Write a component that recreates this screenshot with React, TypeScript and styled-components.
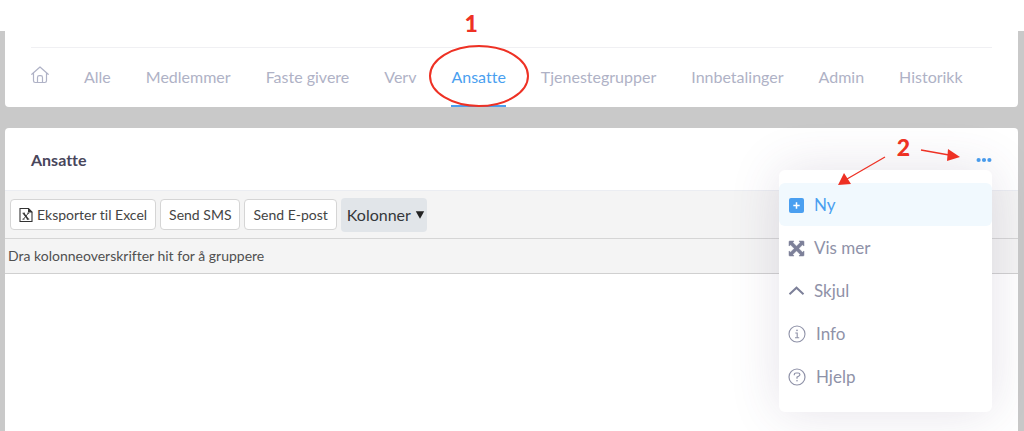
import React from "react";
import styled, { createGlobalStyle, css } from "styled-components";

const GlobalStyle = createGlobalStyle`
  *, *::before, *::after { box-sizing: border-box; }
  body {
    margin: 0;
    background: #c9c9c9;
    font-family: Lato, "Liberation Sans", sans-serif;
    font-variant-ligatures: none;
    color: #a7abc3;
  }
`;

const Page = styled.div`
  display: flex;
  flex-direction: column;
  min-height: 100vh;
`;

const TopBand = styled.div`
  height: 31px;
  background: #fff;
`;

const NavCard = styled.header`
  margin: 0 6px 21px 5px;
  padding: 16px 26px 0;
  background: #fff;
  border-radius: 0 0 4px 4px;
`;

const Tabs = styled.nav`
  display: flex;
  align-items: stretch;
  gap: 35px;
  height: 60px;
  border-top: 1px solid #f0f0f3;
`;

const Tab = styled.a<{ $active?: boolean }>`
  position: relative;
  display: flex;
  align-items: center;
  white-space: nowrap;
  font-size: 16px;
  line-height: 20px;
  text-decoration: none;
  color: ${(p) => (p.$active ? "#4a9ff0" : "#afb2c6")};
  border-bottom: 2px solid ${(p) => (p.$active ? "#4a9ff0" : "transparent")};
`;

const HomeIcon = styled.svg`
  width: 18px;
  height: 18px;
  margin-top: -4px;
`;

const Ring = styled.svg`
  position: absolute;
  z-index: 2;
  left: 50%;
  top: -4px;
  width: 102px;
  height: 64px;
  transform: translateX(-50%);
  pointer-events: none;
`;

const StepNumber = styled.strong`
  position: absolute;
  z-index: 4;
  color: #ee3124;
  font-size: 23px;
  font-weight: 900;
  line-height: 28px;
  pointer-events: none;
`;

const FirstStep = styled(StepNumber)`
  left: 13px;
  top: -39px;
`;

const SecondStep = styled(StepNumber)`
  right: 82px;
  top: -19px;
`;

const Panel = styled.main`
  flex: 1;
  margin: 0 6px 0 5px;
  background: #fff;
  border-radius: 4px 4px 0 0;
`;

const PanelHeader = styled.div`
  display: flex;
  align-items: center;
  justify-content: space-between;
  height: 63px;
  padding: 2px 26px 0;
  border-bottom: 1px solid #ebedf2;
`;

const Title = styled.h1`
  margin: 0;
  font-size: 16px;
  font-weight: 700;
  line-height: 20px;
  color: #48465b;
`;

const Actions = styled.div`
  position: relative;
  display: flex;
`;

const DotsButton = styled.button`
  display: flex;
  align-items: center;
  width: 16px;
  height: 16px;
  padding: 0;
  border: 0;
  background: none;
  color: #4a9ff0;
`;

const Arrows = styled.svg`
  position: absolute;
  z-index: 4;
  right: 29px;
  top: -12px;
  width: 128px;
  height: 48px;
  pointer-events: none;
`;

const Menu = styled.div`
  position: absolute;
  z-index: 3;
  right: 0;
  top: 18px;
  display: flex;
  flex-direction: column;
  width: 213px;
  padding: 13px 0 14px;
  background: #fff;
  border-radius: 6px;
  box-shadow: 0 0 50px 0 rgba(82, 63, 105, 0.15);
`;

const MenuItem = styled.button<{ $active?: boolean; $outline?: boolean }>`
  display: flex;
  align-items: center;
  gap: ${(p) => (p.$outline ? "10px" : "9px")};
  height: 43px;
  padding: 1px 9px 0;
  border: 0;
  border-radius: 6px;
  background: transparent;
  font: 400 17px/20px Lato, "Liberation Sans", sans-serif;
  font-variant-ligatures: none;
  color: #8f92a8;
  text-align: left;

  ${(p) =>
    p.$active &&
    css`
      background: #f1f9fe;
      color: #4a9ff0;
    `}
`;

const MenuIcon = styled.svg<{ $size: number }>`
  flex: none;
  width: ${(p) => p.$size}px;
  height: ${(p) => p.$size}px;
`;

const Toolbar = styled.div`
  display: flex;
  align-items: center;
  gap: 4px;
  height: 48px;
  padding: 0 5px;
  background: #f4f4f4;
  border-bottom: 1px solid #d5d5d5;
`;

const ToolButton = styled.button`
  display: flex;
  align-items: center;
  gap: 4px;
  height: 31px;
  padding: 0 8px;
  border: 1px solid #d5d5d5;
  border-radius: 4px;
  background: #fff;
  font: 400 14px/20px Lato, "Liberation Sans", sans-serif;
  font-variant-ligatures: none;
  color: #444;
  white-space: nowrap;
`;

const ColumnsButton = styled(ToolButton)`
  height: 34px;
  padding: 0 2px 0 6px;
  border: 0;
  background: #e1e5e9;
  font-size: 16px;
  color: #35373a;
`;

const GroupBar = styled.div`
  height: 35px;
  padding: 0 3px;
  background: #f4f4f4;
  border-bottom: 1px solid #d0d0d0;
  font-size: 14px;
  line-height: 34px;
  color: #505050;
`;

const before = ["Alle", "Medlemmer", "Faste givere", "Verv"];
const after = ["Tjenestegrupper", "Innbetalinger", "Admin", "Historikk"];

export default function App() {
  return (
    <Page>
      <GlobalStyle />
      <TopBand />
      <NavCard>
        <Tabs>
          <Tab href="#hjem" aria-label="Hjem">
            <HomeIcon viewBox="0 0 18 18" fill="none" stroke="#afb2c6" strokeWidth="1.2" strokeLinecap="round" strokeLinejoin="round">
              <path d="M.8 8.3 9 1l8.2 7.3M2.5 7.2v7.6q0 1.7 1.7 1.7h9.6q1.7 0 1.7-1.7V7.2M6.5 16.3v-4.8q0-1.8 1.8-1.8h1.4q1.8 0 1.8 1.8v4.8" />
            </HomeIcon>
          </Tab>
          {before.map((t) => (
            <Tab key={t} href="#">{t}</Tab>
          ))}
          <Tab href="#" $active aria-current="page">
            Ansatte
            <FirstStep>1</FirstStep>
            <Ring viewBox="0 0 102 64" fill="none" stroke="#ee3124" strokeWidth="2">
              <ellipse cx="51" cy="32" rx="49" ry="30" />
            </Ring>
          </Tab>
          {after.map((t) => (
            <Tab key={t} href="#">{t}</Tab>
          ))}
        </Tabs>
      </NavCard>
      <Panel>
        <PanelHeader>
          <Title>Ansatte</Title>
          <Actions>
            <DotsButton aria-label="Flere valg">
              <svg width="16" height="6" viewBox="0 0 16 6" fill="currentColor">
                <circle cx="2.6" cy="3" r="2.1" />
                <circle cx="8" cy="3" r="2.1" />
                <circle cx="13.4" cy="3" r="2.1" />
              </svg>
            </DotsButton>
            <SecondStep>2</SecondStep>
            <Arrows viewBox="0 0 128 48" fill="#ee3124" stroke="#ee3124">
              <path d="M50 17 12 39M86 10l28 5" fill="none" strokeWidth="1.3" />
              <path d="m3 45 6-12 7 11ZM125 17l-12-8-1 12Z" stroke="none" />
            </Arrows>
            <Menu>
              <MenuItem $active>
                <MenuIcon $size={17} viewBox="0 0 17 17">
                  <rect x="1" y="1" width="15" height="15" rx="2" fill="currentColor" />
                  <path d="M5.3 8.5h6.4M8.5 5.3v6.4" stroke="#fff" strokeWidth="1.5" />
                </MenuIcon>
                Ny
              </MenuItem>
              <MenuItem>
                <MenuIcon $size={17} viewBox="0 0 17 17" fill="#7d8099">
                  <path d="M1 1.8Q1 1 1.8 1H6L4.8 2.5 8.5 6.2l3.7-3.7L11 1h4.2q.8 0 .8.8V6l-1.5-1.2-3.7 3.7 3.7 3.7L16 11v4.2q0 .8-.8.8H11l1.2-1.5-3.7-3.7-3.7 3.7L6 16H1.8Q1 16 1 15.2V11l1.5 1.2 3.7-3.7-3.7-3.7L1 6Z" stroke="#7d8099" strokeWidth=".5" />
                </MenuIcon>
                Vis mer
              </MenuItem>
              <MenuItem>
                <MenuIcon $size={17} viewBox="0 0 17 17" fill="none" stroke="#7d8099" strokeWidth="2">
                  <path d="m1.5 11.2 7-6.5 7 6.5" />
                </MenuIcon>
                Skjul
              </MenuItem>
              <MenuItem $outline>
                <MenuIcon $size={18} viewBox="0 0 18 18" fill="none" stroke="#8f92a8" strokeWidth="1.1">
                  <circle cx="9" cy="9" r="8" />
                  <path d="M7.3 8h1.9v4.6M7 12.7h4.2" />
                  <circle cx="9" cy="5.4" r=".8" fill="#8f92a8" stroke="none" />
                </MenuIcon>
                Info
              </MenuItem>
              <MenuItem $outline>
                <MenuIcon $size={18} viewBox="0 0 18 18" fill="none" stroke="#8f92a8" strokeWidth="1.2">
                  <circle cx="9" cy="9" r="8" />
                  <path d="M6.3 7.3V6.6Q6.3 5 8 5h2.2q1.7 0 1.7 1.6 0 1.2-1.3 1.7L9 9.2v1.5" />
                  <circle cx="9" cy="12.7" r=".8" fill="#8f92a8" stroke="none" />
                </MenuIcon>
                Hjelp
              </MenuItem>
            </Menu>
          </Actions>
        </PanelHeader>
        <Toolbar>
          <ToolButton>
            <svg width="14" height="16" viewBox="0 0 14 16" fill="none" stroke="#333">
              <path d="M1 1.5h8.5L13 5v9.500H1Z" strokeWidth="1.1" />
              <path d="M9 1v4.5h4.5Z" fill="#333" stroke="none" />
              <path d="m4.5 6.200 4.600 6" strokeWidth="1.600" />
              <path d="M9.300 6.200 4.400 12.200M3.500 6.200h2.500M8.200 6.200h2M3.500 12.200h2M7.800 12.200h2.500" strokeWidth=".9" />
            </svg>
            Eksporter til Excel
          </ToolButton>
          <ToolButton>Send SMS</ToolButton>
          <ToolButton>Send E-post</ToolButton>
          <ColumnsButton>
            Kolonner
            <svg width="10" height="8" viewBox="0 0 10 8" fill="#222">
              <path d="M.8.3h8.400L5 7.700Z" />
            </svg>
          </ColumnsButton>
        </Toolbar>
        <GroupBar>Dra kolonneoverskrifter hit for å gruppere</GroupBar>
      </Panel>
    </Page>
  );
}
